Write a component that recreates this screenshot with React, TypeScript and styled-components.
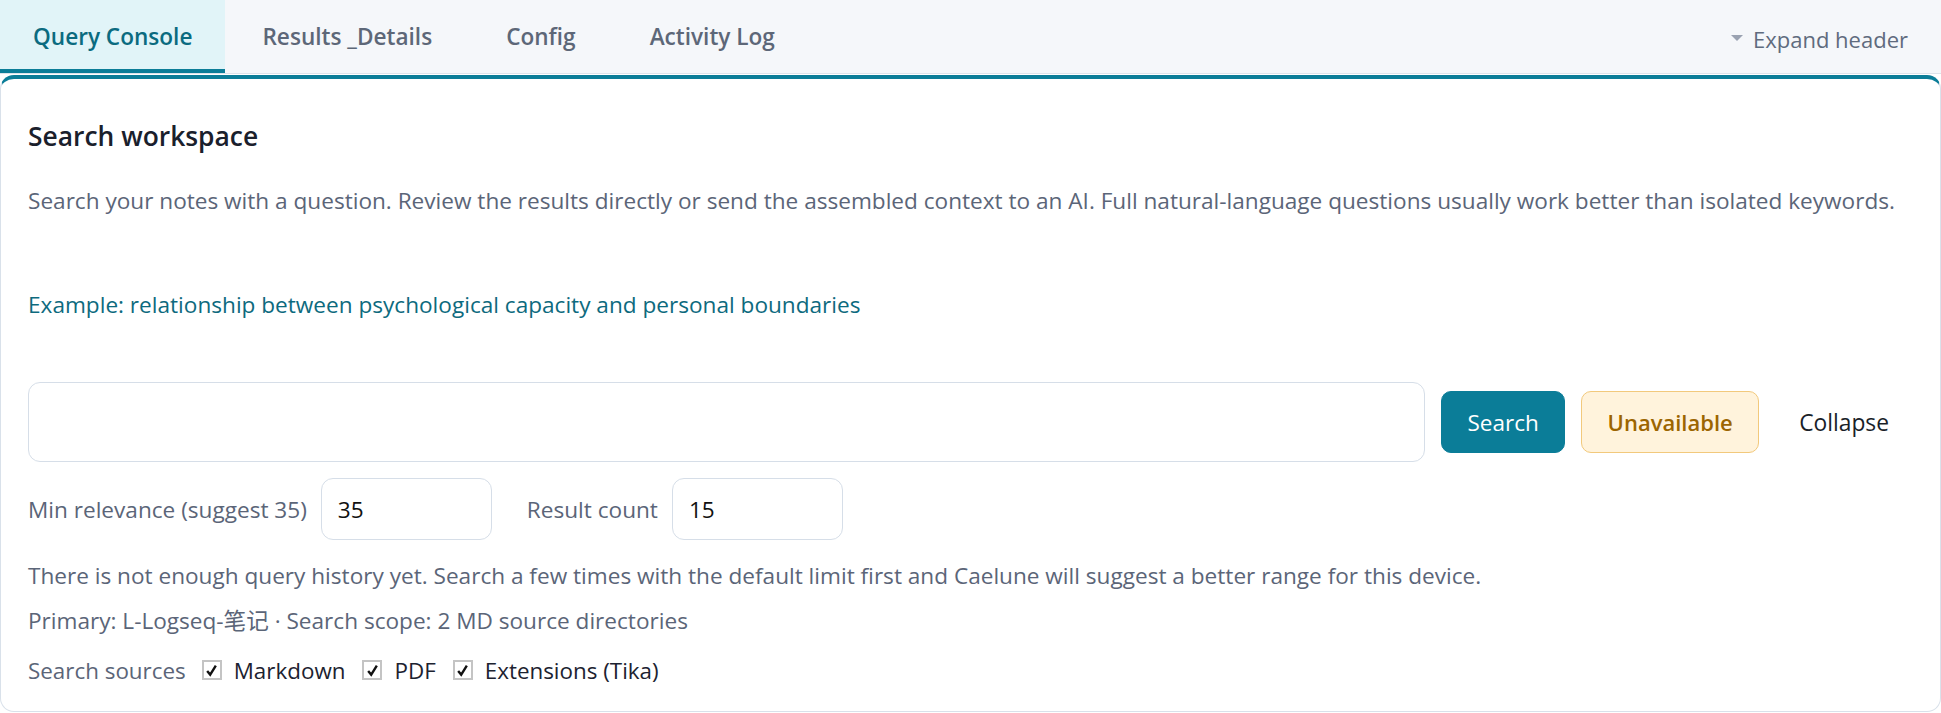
import React from "react";
import styled, { createGlobalStyle } from "styled-components";

const GlobalStyle = createGlobalStyle`
  html, body { margin: 0; padding: 0; background: #ffffff; }
  body { font-family: "Open Sans", "Noto Sans", "Noto Sans CJK SC", sans-serif; }
  * { box-sizing: border-box; }
`;

const Page = styled.div`
  display: flex;
  flex-direction: column;
  width: 1941px;
`;

const TabBar = styled.div`
  display: flex;
  align-items: stretch;
  height: 74px;
  background: #f5f7fa;
  border-bottom: 1px solid #dde3ea;
`;

const Tab = styled.div<{ $active?: boolean }>`
  display: flex;
  align-items: center;
  padding: 4px ${(p) => (p.$active ? "33px" : "37px")} 0;
  font-size: 22.6px;
  font-weight: 600;
  color: ${(p) => (p.$active ? "#0b6b80" : "#5d6778")};
  background: ${(p) => (p.$active ? "#e1f4f8" : "transparent")};
  border-bottom: 4px solid ${(p) => (p.$active ? "#0b7d98" : "transparent")};
`;

const ExpandHeader = styled.div`
  margin-left: auto;
  display: flex;
  align-items: center;
  gap: 10px;
  padding: 4px 33px 0 0;
  font-size: 22px;
  color: #5f6b7e;
`;

const Caret = styled.span`
  display: inline-block;
  width: 0;
  height: 0;
  border-left: 6px solid transparent;
  border-right: 6px solid transparent;
  border-top: 6px solid #9aa2b1;
  margin-top: -2px;
`;

const Card = styled.section`
  margin-top: 1px;
  border: 1px solid #d9e1ea;
  border-top: 4px solid #0b7d98;
  border-radius: 14px;
  padding: 41px 27px 27px;
  display: flex;
  flex-direction: column;
`;

const Heading = styled.h2`
  margin: 0;
  font-size: 26.4px;
  line-height: 32px;
  font-weight: 600;
  color: #1a202c;
`;

const Description = styled.p`
  margin: 35px 0 0;
  font-size: 22.6px;
  line-height: 28px;
  color: #5b6578;
  white-space: nowrap;
`;

const Example = styled.p`
  margin: 76px 0 0;
  font-size: 22.6px;
  line-height: 28px;
  color: #0d6a7e;
`;

const SearchRow = styled.div`
  margin-top: 63px;
  display: flex;
  align-items: center;
  gap: 16px;
`;

const QueryInput = styled.input`
  flex: 1;
  min-width: 0;
  height: 80px;
  border: 1px solid #d6dee8;
  border-radius: 12px;
  padding: 0 20px;
  font: inherit;
  font-size: 22.6px;
  outline: none;
`;

const Button = styled.button<{ $variant: "primary" | "warn" | "ghost" }>`
  height: 62px;
  flex-shrink: 0;
  border-radius: 10px;
  font-family: inherit;
  padding: 0 ${(p) => (p.$variant === "ghost" ? "23px" : "0")};
  cursor: pointer;
  ${(p) =>
    p.$variant === "primary"
      ? `background:#0b7d98;color:#ffffff;border:1px solid #0b7d98;font-weight:500;width:124px;font-size:22.5px;`
      : p.$variant === "warn"
      ? `background:#fff3dc;color:#9c6500;border:1px solid #f2c97c;font-weight:600;width:178px;font-size:22px;`
      : `background:transparent;color:#1a1f29;border:1px solid transparent;font-weight:400;font-size:22.8px;`}
`;

const ParamRow = styled.div`
  margin-top: 16px;
  display: flex;
  align-items: center;
`;

const Field = styled.label`
  display: flex;
  align-items: center;
  gap: 14px;
  font-size: 22.6px;
  color: #5b6578;
  & + & { margin-left: 35px; }
`;

const NumberInput = styled.input`
  width: 171px;
  height: 62px;
  border: 1px solid #d6dee8;
  border-radius: 12px;
  padding: 0 16px;
  font: inherit;
  font-size: 22.6px;
  color: #111;
  outline: none;
`;

const Note = styled.p<{ $gap: number }>`
  margin: ${(p) => p.$gap}px 0 0;
  font-size: 22.6px;
  line-height: 28px;
  color: #5b6578;
  white-space: nowrap;
`;

const SourcesRow = styled.div`
  margin-top: 21px;
  display: flex;
  align-items: center;
  height: 28px;
  font-size: 22.4px;
  color: #5b6578;
`;

const SourceLabel = styled.span`
  margin-right: 16px;
`;

const Check = styled.label`
  display: flex;
  align-items: center;
  gap: 12px;
  color: #1c2230;
  margin-right: 17px;
`;

const Box = styled.span`
  flex-shrink: 0;
  width: 20px;
  height: 20px;
  border: 2px solid #c4c4c4;
  background: #fff;
  display: flex;
  align-items: center;
  justify-content: center;
`;

const CheckBox = ({ label }: { label: string }) => (
  <Check>
    <Box>
      <svg width="13" height="13" viewBox="0 0 12 12">
        <path d="M2 6.4 L4.8 9.8 L10 1.6" fill="none" stroke="#111" strokeWidth="2.2" />
      </svg>
    </Box>
    {label}
  </Check>
);

export default function App() {
  return (
    <Page>
      <GlobalStyle />
      <TabBar>
        <Tab $active>Query Console</Tab>
        <Tab>Results _Details</Tab>
        <Tab>Config</Tab>
        <Tab>Activity Log</Tab>
        <ExpandHeader>
          <Caret />
          Expand header
        </ExpandHeader>
      </TabBar>
      <Card>
        <Heading>Search workspace</Heading>
        <Description>
          Search your notes with a question. Review the results directly or send the assembled context to an AI. Full
          natural-language questions usually work better than isolated keywords.
        </Description>
        <Example>Example: relationship between psychological capacity and personal boundaries</Example>
        <SearchRow>
          <QueryInput />
          <Button $variant="primary">Search</Button>
          <Button $variant="warn">Unavailable</Button>
          <Button $variant="ghost">Collapse</Button>
        </SearchRow>
        <ParamRow>
          <Field>
            Min relevance (suggest 35)
            <NumberInput defaultValue="35" />
          </Field>
          <Field>
            Result count
            <NumberInput defaultValue="15" />
          </Field>
        </ParamRow>
        <Note $gap={22}>
          There is not enough query history yet. Search a few times with the default limit first and Caelune will
          suggest a better range for this device.
        </Note>
        <Note $gap={17}>Primary: L-Logseq-笔记 · Search scope: 2 MD source directories</Note>
        <SourcesRow>
          <SourceLabel>Search sources</SourceLabel>
          <CheckBox label="Markdown" />
          <CheckBox label="PDF" />
          <CheckBox label="Extensions (Tika)" />
        </SourcesRow>
      </Card>
    </Page>
  );
}
